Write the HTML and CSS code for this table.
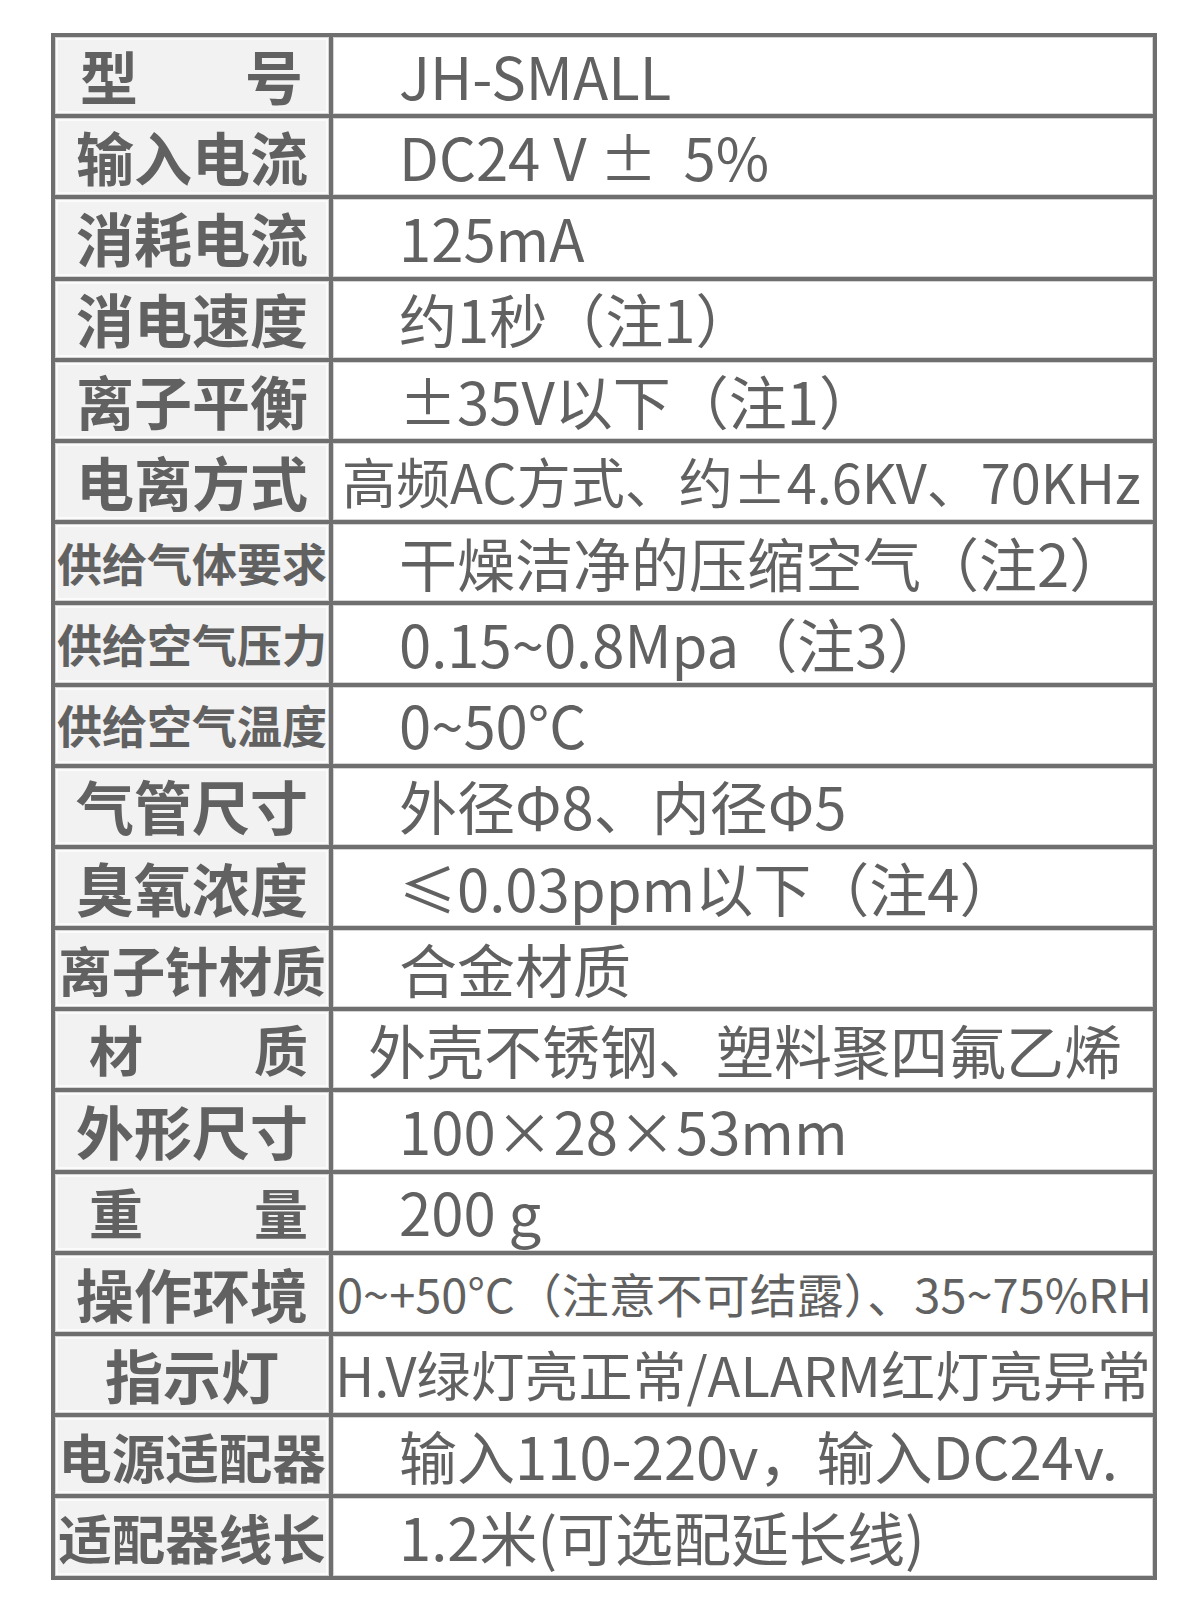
FILE: index.html
```html
<!DOCTYPE html>
<html lang="zh-CN">
<head>
<meta charset="utf-8">
<title>规格参数</title>
<link rel="stylesheet" href="styles.css">
</head>
<body>
<div class="spec">
  <div class="k split"><span>型</span><span>号</span></div>
  <div class="v">JH-SMALL</div>

  <div class="k">输入电流</div>
  <div class="v">DC24 V ±&nbsp; 5%</div>

  <div class="k">消耗电流</div>
  <div class="v">125mA</div>

  <div class="k">消电速度</div>
  <div class="v">约1秒（注1）</div>

  <div class="k">离子平衡</div>
  <div class="v">±35V以下（注1）</div>

  <div class="k">电离方式</div>
  <div class="v v-wide">高频AC方式、约±4.6KV、70KHz</div>

  <div class="k k-small">供给气体要求</div>
  <div class="v">干燥洁净的压缩空气（注2）</div>

  <div class="k k-small">供给空气压力</div>
  <div class="v">0.15~0.8Mpa（注3）</div>

  <div class="k k-small">供给空气温度</div>
  <div class="v">0~50°C</div>

  <div class="k">气管尺寸</div>
  <div class="v">外径Φ8、内径Φ5</div>

  <div class="k">臭氧浓度</div>
  <div class="v">≤0.03ppm以下（注4）</div>

  <div class="k k-five">离子针材质</div>
  <div class="v">合金材质</div>

  <div class="k split split-b"><span>材</span><span>质</span></div>
  <div class="v v-shell">外壳不锈钢、塑料聚四氟乙烯</div>

  <div class="k">外形尺寸</div>
  <div class="v">100×28×53mm</div>

  <div class="k split split-b"><span>重</span><span>量</span></div>
  <div class="v">200 g</div>

  <div class="k">操作环境</div>
  <div class="v v-env">0~+50°C（注意不可结露）、35~75%RH</div>

  <div class="k">指示灯</div>
  <div class="v v-led">H.V绿灯亮正常/ALARM红灯亮异常</div>

  <div class="k k-five">电源适配器</div>
  <div class="v">输入110-220v，输入DC24v.</div>

  <div class="k k-five">适配器线长</div>
  <div class="v">1.2米(可选配延长线)</div>
</div>
</body>
</html>
```

FILE: styles.css
```css
html, body {
  margin: 0;
  padding: 0;
  background: #ffffff;
}

body {
  padding: 33px 0 0 51px;
  font-family: "Noto Sans CJK SC", "Noto Sans", sans-serif;
  color: #616161;
}

.spec {
  width: 1106px;
  box-sizing: border-box;
  display: grid;
  grid-template-columns: 274px 820px;
  grid-auto-rows: 77.2px;
  gap: 4px;
  padding: 4px;
  background: #6f6f6f;
}

.k,
.v {
  display: flex;
  align-items: center;
  white-space: nowrap;
  line-height: 1.2;
  min-width: 0;
}

.k {
  justify-content: center;
  background: #f2f2f2;
  box-shadow: inset 0 0 0 1px #d4d4d4, inset 0 0 0 3px #fbfbfb;
  font-weight: 700;
  font-size: 58px;
}

.k-small {
  font-size: 45px;
}

.k-five {
  font-size: 53.5px;
}

.split {
  justify-content: space-between;
  padding: 0 26px 0 25px;
}

.split-b {
  padding: 0 21px 0 34px;
  font-size: 54px;
}

.v {
  background: #ffffff;
  box-shadow: inset 0 0 0 1px #d4d4d4;
  font-weight: 400;
  font-size: 58px;
  padding-left: 66px;
}

.v-wide {
  padding-left: 9px;
  font-size: 54px;
}

.v-shell {
  padding-left: 35px;
  font-size: 58px;
}

.v-env {
  padding-left: 4px;
  font-size: 47px;
}

.v-led {
  padding-left: 2px;
  font-size: 54px;
}
```
